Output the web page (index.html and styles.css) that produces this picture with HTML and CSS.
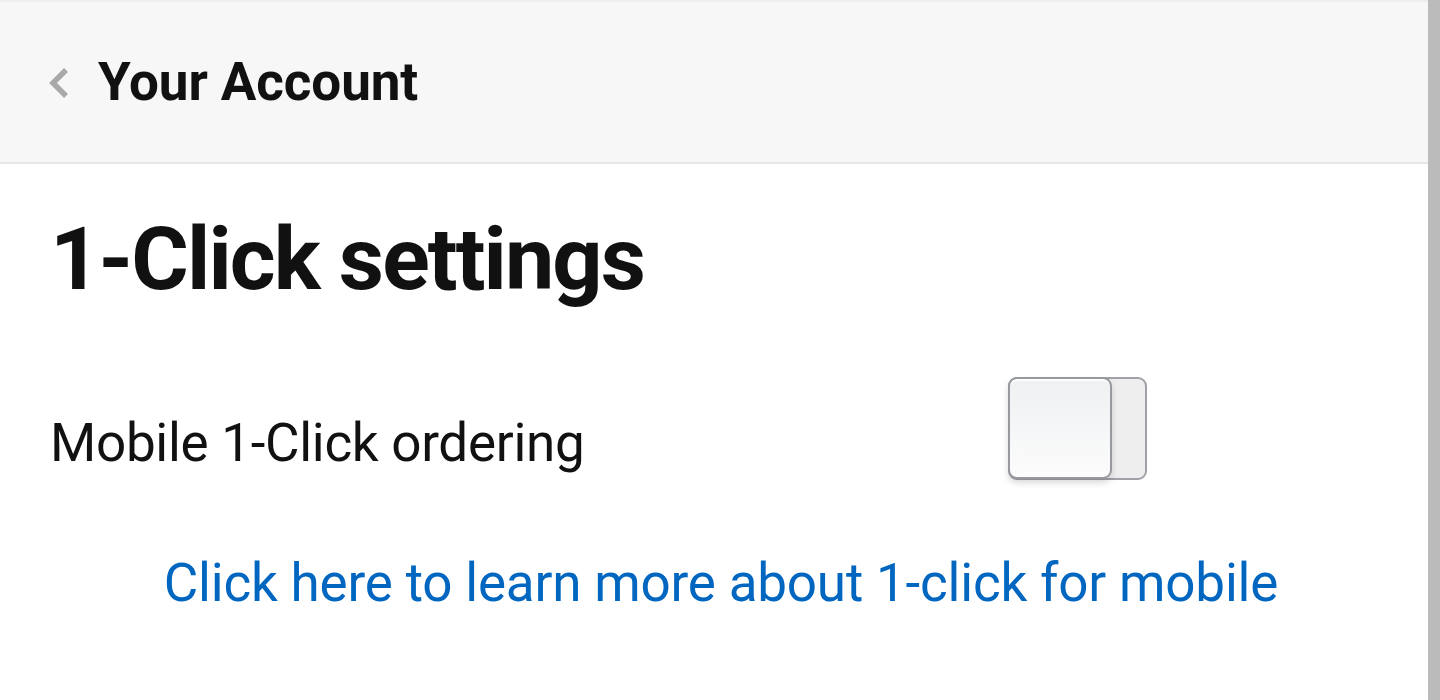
FILE: index.html
```html
<!DOCTYPE html>
<html>
<head>
<meta charset="utf-8">
<link rel="stylesheet" href="styles.css">
</head>
<body>
<div class="page">
  <div class="main">
    <header class="topbar">
      <svg class="back" width="22" height="32" viewBox="0 0 22 32"><path d="M18 3 L5 16 L18 29" fill="none" stroke="#a9a9a9" stroke-width="5.5"/></svg>
      <span class="topbar-title">Your Account</span>
    </header>
    <section class="content">
      <h1 class="title">1-Click settings</h1>
      <div class="setting">
        <span class="setting-label">Mobile 1-Click ordering</span>
        <div class="toggle"><div class="knob"></div></div>
      </div>
      <div class="more"><a class="more-link" href="#">Click here to learn more about 1-click for mobile</a></div>
    </section>
  </div>
  <div class="scrollbar"></div>
</div>
</body>
</html>
```

FILE: styles.css
```css
html, body { margin: 0; padding: 0; }
body { font-family: Roboto, "Liberation Sans", sans-serif; color: #111; background: #fff; }
.page { display: flex; height: 700px; overflow: hidden; }
.main { flex: 1; }
.scrollbar { width: 12px; background: #bbbbbb; }
.topbar {
  height: 160px;
  background: #f7f7f7;
  border-top: 2px solid #eeeeee;
  border-bottom: 2px solid #e6e6e6;
  box-sizing: content-box;
  display: flex;
  align-items: center;
  padding-left: 48px;
}
.back { margin-right: 28px; margin-top: 2px; filter: blur(0.7px); }
.topbar-title { font-size: 53px; font-weight: 700; color: #111; letter-spacing: -0.1px; }
.content { padding: 0 50px; }
.title { margin: 35px 0 0; font-size: 88px; font-weight: 700; line-height: 120px; color: #111; letter-spacing: -1.9px; }
.setting { display: flex; align-items: flex-start; margin-top: 58px; }
.setting-label { font-size: 53px; line-height: 62px; flex: 1; padding-top: 35px; letter-spacing: -0.3px; }
.toggle {
  width: 135px; height: 99px;
  border: 2px solid #a0a2a7;
  border-radius: 9px;
  background: #eeeeee;
  position: relative;
  margin-right: 231px;
}
.knob {
  position: absolute; left: -2px; top: -2px;
  width: 100px; height: 98px;
  border: 2.5px solid #97999e;
  border-radius: 9px;
  background: linear-gradient(#eef0f2, #fcfcfc);
  box-shadow: 0 4px 6px rgba(0,0,0,0.15), inset 0 2px 1px #fff;
}
.more { text-align: center; margin-top: 72px; padding-left: 14px; }
.more-link { font-size: 53px; line-height: 62px; color: #0066c0; text-decoration: none; letter-spacing: -0.2px; }
```
